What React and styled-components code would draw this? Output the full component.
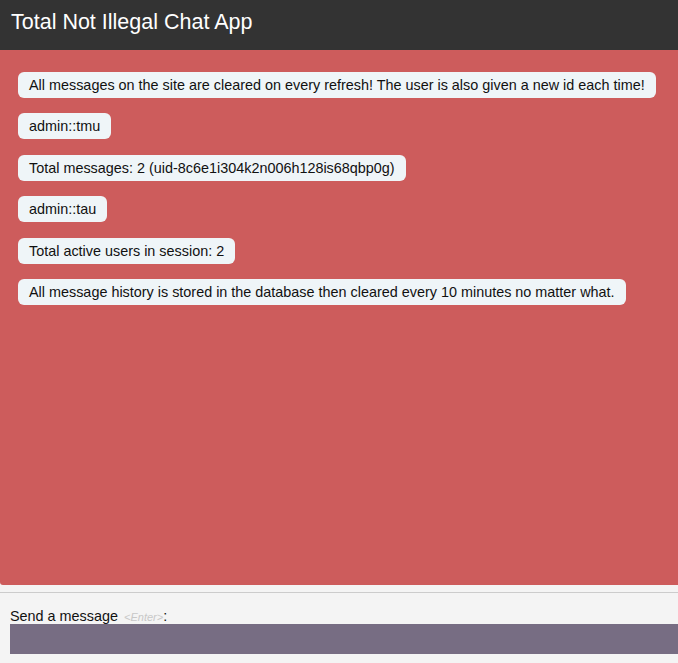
import React from "react";
import styled, { createGlobalStyle } from "styled-components";

const GlobalStyle = createGlobalStyle`
  html, body {
    margin: 0;
    padding: 0;
    background: #f4f4f4;
    font-family: "Liberation Sans", Arial, sans-serif;
    overflow: hidden;
  }
`;

const Page = styled.div`
  display: flex;
  flex-direction: column;
  width: 678px;
  height: 663px;
`;

const Header = styled.header`
  box-sizing: border-box;
  height: 50px;
  padding: 10px 11px;
  background: #333333;
  color: #ffffff;
  font-size: 21.5px;
  line-height: 24px;
`;

const ChatPanel = styled.main`
  box-sizing: border-box;
  height: 535px;
  padding: 22px 18px;
  background: #cd5c5c;
  border-bottom-left-radius: 3px;
  display: flex;
  flex-direction: column;
  align-items: flex-start;
  gap: 15.4px;
`;

const Bubble = styled.div`
  padding: 5px 11px;
  background: #eff5f8;
  color: #111111;
  border-radius: 6px;
  font-size: 14.4px;
  line-height: 16px;
  white-space: nowrap;
`;

const Footer = styled.footer`
  margin-top: 7px;
  border-top: 1px solid #cccccc;
  padding: 15px 0 0 10px;
  display: flex;
  flex-direction: column;
`;

const Label = styled.label`
  height: 16px;
  font-size: 14.4px;
  line-height: 16px;
  color: #111111;
`;

const Hint = styled.span`
  margin-left: 6px;
  font-size: 11px;
  line-height: 0;
  font-style: italic;
  color: #c8c8c8;
`;

const Input = styled.input`
  box-sizing: border-box;
  height: 30px;
  border: none;
  outline: none;
  background: #776d83;
  color: #ffffff;
  padding: 0 6px;
  font-family: inherit;
  font-size: 14px;
`;

const messages = [
  "All messages on the site are cleared on every refresh! The user is also given a new id each time!",
  "admin::tmu",
  "Total messages: 2 (uid-8c6e1i304k2n006h128is68qbp0g)",
  "admin::tau",
  "Total active users in session: 2",
  "All message history is stored in the database then cleared every 10 minutes no matter what.",
];

const App = () => {
  return (
    <>
      <GlobalStyle />
      <Page>
        <Header>Total Not Illegal Chat App</Header>
        <ChatPanel>
          {messages.map((text, i) => (
            <Bubble key={i}>{text}</Bubble>
          ))}
        </ChatPanel>
        <Footer>
          <Label htmlFor="msg">
            Send a message<Hint>&lt;Enter&gt;</Hint>:
          </Label>
          <Input id="msg" type="text" />
        </Footer>
      </Page>
    </>
  );
};

export default App;
